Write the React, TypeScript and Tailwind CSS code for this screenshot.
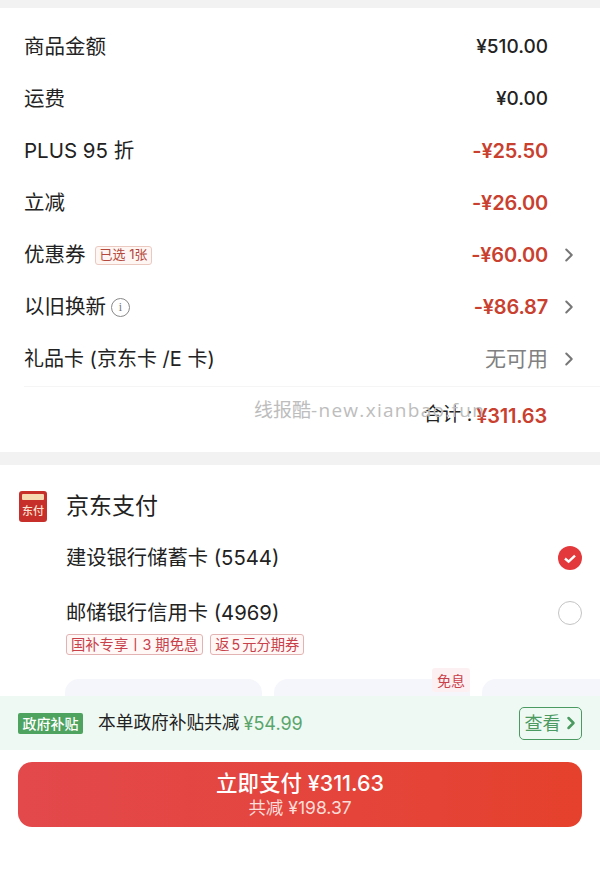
import { ChevronRight } from "lucide-react";

const font = "font-['Inter','Noto_Sans_CJK_SC',sans-serif]";

type RowProps = {
  label: React.ReactNode;
  value: string;
  tone?: "black" | "red" | "gray";
  arrow?: boolean;
};

const Row = ({ label, value, tone = "black", arrow }: RowProps) => {
  const toneClass =
    tone === "red"
      ? "text-[20px] text-[#c9402f] font-semibold tracking-[-0.2px]"
      : tone === "gray"
        ? "text-[21px] text-[#808080]"
        : "text-[19px] text-[#222] font-medium";
  return (
    <div className="h-[52px] flex items-center pl-6 pr-[52px] relative">
      <div className="flex-1 flex items-center text-[20.5px] text-[#222]">{label}</div>
      <div className={toneClass}>{value}</div>
      {arrow && (
        <ChevronRight size={22} strokeWidth={2.2} className="absolute right-[20px] text-[#777]" />
      )}
    </div>
  );
};

const Tag = ({ children }: { children: React.ReactNode }) => (
  <span className="h-[21px] flex items-center px-1 border border-[#e3b3b3] rounded-[3px] bg-[#fff8f7] text-[14.3px] text-[#c8414a] whitespace-nowrap">
    {children}
  </span>
);

const App = () => {
  return (
    <div className={`w-[600px] h-[884px] overflow-hidden bg-white relative ${font}`}>
      <div className="h-2 bg-[#f2f2f2]" />

      <div className="pt-[13px] h-[444px]">
        <Row label="商品金额" value="¥510.00" />
        <Row label="运费" value="¥0.00" />
        <Row label="PLUS 95 折" value="-¥25.50" tone="red" />
        <Row label="立减" value="-¥26.00" tone="red" />
        <Row
          label={
            <>
              优惠券
              <span className="ml-[9px] h-[19px] px-1 flex items-center border border-[#ecc9c0] rounded-[3px] bg-[#fdf6f3] text-[13px] text-[#b5483c]">
                已选 1张
              </span>
            </>
          }
          value="-¥60.00"
          tone="red"
          arrow
        />
        <Row
          label={
            <>
              以旧换新
              <span className="ml-[5px] w-[19px] h-[19px] rounded-full border border-[#888] flex items-center justify-center text-[12px] text-[#777] font-['Liberation_Serif',serif]">
                i
              </span>
            </>
          }
          value="-¥86.87"
          tone="red"
          arrow
        />
        <Row label={<span className="text-[20px]">礼品卡 (京东卡 /E 卡)</span>} value="无可用" tone="gray" arrow />

        <div className="ml-6 mt-px border-t border-[#f5f5f5] h-[58px] flex items-center justify-end pr-[53px] text-[20px]">
          <span className="text-[#222] text-[19px]">合计 :</span>
          <span className="text-[#c9402f] font-semibold ml-1 tracking-[-0.2px]">¥311.63</span>
        </div>
      </div>

      <div className="h-[13px] bg-[#f2f2f2]" />

      <div className="pl-[19px] pr-[19px] pt-[26px]">
        <div className="flex items-center h-[30px]">
          <div className="w-[28px] h-[31px] rounded-[3px] bg-[#c7302a] flex flex-col items-center pt-[3px]">
            <div className="w-[22px] h-[6px] bg-[#f6d9b0] rounded-[1px]" />
            <span className="text-[11px] leading-none mt-[6px] text-[#fbe3d3] font-medium">东付</span>
          </div>
          <span className="ml-[19px] text-[23px] text-[#222]">京东支付</span>
        </div>

        <div className="pl-[47px] mt-[23px] h-[28px] flex items-center justify-between text-[20.3px] text-[#222]">
          <span>建设银行储蓄卡 (5544)</span>
          <span className="w-6 h-6 mr-[-1px] rounded-full bg-[#e4393c] flex items-center justify-center">
            <svg width="14" height="11" viewBox="0 0 14 11" fill="none">
              <path d="M2 5.5 L5.6 8.6 L12 2.6" stroke="white" strokeWidth="2.4" />
            </svg>
          </span>
        </div>

        <div className="pl-[47px] mt-[27px] h-[28px] flex items-center justify-between text-[20.3px] text-[#222]">
          <span>邮储银行信用卡 (4969)</span>
          <span className="w-6 h-6 mr-[-1px] rounded-full border border-[#c4c4c4]" />
        </div>

        <div className="pl-[47px] mt-[7px] flex gap-[7px]">
          <Tag>国补专享丨3 期免息</Tag>
          <Tag>返<span className="mx-[2px]">5</span>元分期券</Tag>
        </div>
      </div>

      {/* 分期卡片，被下面的绿条压住 */}
      <div className="mt-[24px] h-[24px] pl-[65px] flex gap-3 overflow-hidden relative">
        <div className="w-[197px] h-[40px] shrink-0 rounded-t-[14px] bg-[#f5f6fb]" />
        <div className="w-[196px] h-[40px] shrink-0 rounded-t-[14px] bg-[#f5f6fb]" />
        <div className="w-[196px] h-[40px] shrink-0 rounded-t-[14px] bg-[#f5f6fb]" />
      </div>
      <span className="absolute left-[432px] top-[668px] h-[24px] w-[38px] flex items-center justify-center rounded-[3px] bg-[#fdf0f2] text-[14px] text-[#c8414a]">
        免息
      </span>

      <div className="absolute left-0 top-[696px] w-full h-[54px] bg-[#eff9f3] flex items-center pl-[18px] pr-[18px]">
        <span className="w-[65px] h-[21px] rounded-[2px] bg-[#4ea35f] text-white text-[14px] flex items-center justify-center font-medium">
          政府补贴
        </span>
        <span className="ml-[15px] text-[17.7px] text-[#222]">本单政府补贴共减</span>
        <span className="ml-1 text-[18px] text-[#5aa56c]">¥54.99</span>
        <span className="ml-auto w-[63px] h-[33px] rounded-[5px] border border-[#4b9a62] flex items-center justify-center text-[18px] text-[#4b9a62]">
          查看
          <ChevronRight size={20} strokeWidth={3} className="-mr-1" />
        </span>
      </div>

      <div className="absolute left-[18px] top-[762px] w-[564px] h-[65px] rounded-[14px] bg-gradient-to-r from-[#e3484b] to-[#e5412c] flex flex-col items-center justify-center text-white">
        <span className="text-[21.5px] leading-[27px] font-medium">立即支付 ¥311.63</span>
        <span className="text-[17.5px] leading-[22px] text-[#fbdcd8]">共减 ¥198.37</span>
      </div>

      {/* 水印 */}
      <div className="absolute left-[254px] top-[396px] text-[19px] text-[#bdbdbd] whitespace-nowrap font-['Open_Sans','Noto_Sans_CJK_SC',sans-serif]">
        线报酷<span className="tracking-[1.3px]">-new.xianbao.fun</span>
      </div>
    </div>
  );
};

export default App;
